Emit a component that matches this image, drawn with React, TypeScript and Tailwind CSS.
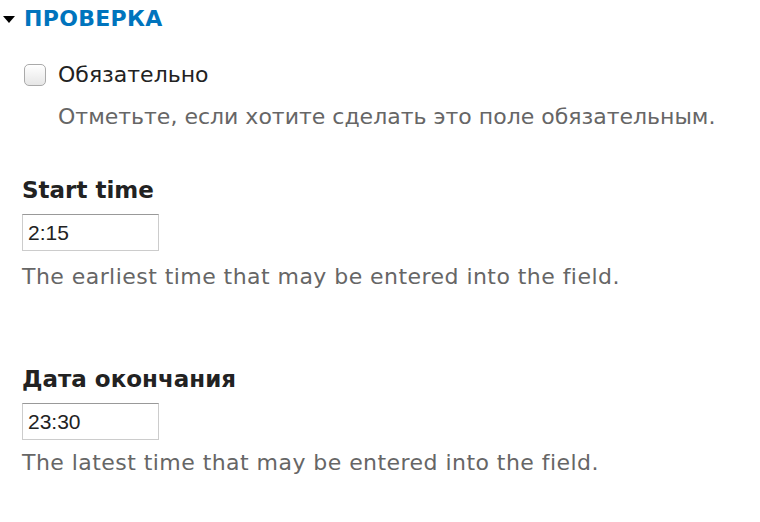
import { useState } from 'react';

export default function App() {
  const [open, setOpen] = useState(true);
  const [required, setRequired] = useState(false);
  const [start, setStart] = useState('2:15');
  const [end, setEnd] = useState('23:30');

  return (
    <div className="w-[760px] h-[522px] bg-white font-['DejaVu_Sans',sans-serif] text-[#222]">
      {/* Fieldset header */}
      <button
        onClick={() => setOpen(!open)}
        className="flex items-center pt-[6px] pl-[3px] text-[#0074bd] font-bold text-[22px] leading-[26px] tracking-[0.3px] uppercase"
      >
        <svg width="12" height="7" viewBox="0 0 12 7" className="mr-[9px]">
          <polygon points="0,0 12,0 6,7" fill="#000" />
        </svg>
        Проверка
      </button>

      {open && (
        <div className="pl-[22px]">
          <div className="mt-[30px] pl-[2px]">
            <label className="flex items-center gap-[12px] text-[22px] leading-[26px]">
              <input
                type="checkbox"
                checked={required}
                onChange={(e) => setRequired(e.target.checked)}
                className="w-[22px] h-[22px] appearance-none rounded-[5px] border border-[#aaa] bg-gradient-to-b from-white to-[#e6e6e6] shadow-[inset_0_1px_0_#fff]"
              />
              Обязательно
            </label>
            <p className="mt-[16px] pl-[34px] text-[22px] leading-[26px] text-[#666]">
              Отметьте, если хотите сделать это поле обязательным.
            </p>
          </div>

          <div className="mt-[46px]">
            <div className="font-bold text-[23px] leading-[28px]">Start time</div>
            <input
              value={start}
              onChange={(e) => setStart(e.target.value)}
              className="mt-[10px] w-[137px] h-[37px] px-[5px] border border-[#ccc] border-t-[#999] font-['Liberation_Sans',sans-serif] text-[21px] text-[#222] outline-none"
            />
            <p className="mt-[13px] text-[22px] leading-[26px] tracking-[0.45px] text-[#666]">
              The earliest time that may be entered into the field.
            </p>
          </div>

          <div className="mt-[75px]">
            <div className="font-bold text-[23px] leading-[28px]">Дата окончания</div>
            <input
              value={end}
              onChange={(e) => setEnd(e.target.value)}
              className="mt-[10px] w-[137px] h-[37px] px-[5px] border border-[#ccc] border-t-[#999] font-['Liberation_Sans',sans-serif] text-[21px] text-[#222] outline-none"
            />
            <p className="mt-[10px] text-[22px] leading-[26px] tracking-[0.45px] text-[#666]">
              The latest time that may be entered into the field.
            </p>
          </div>
        </div>
      )}
    </div>
  );
}
